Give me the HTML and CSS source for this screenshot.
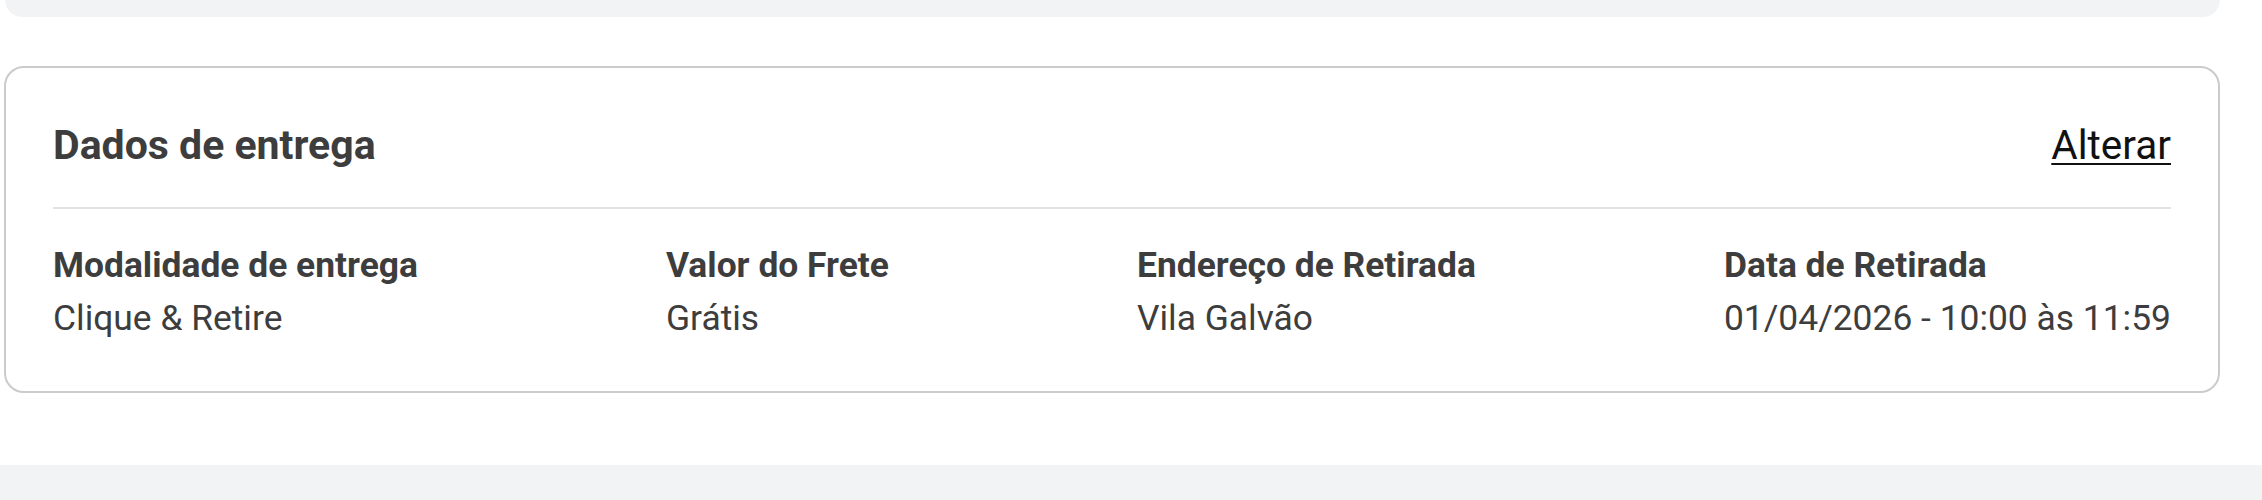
FILE: index.html
```html
<!DOCTYPE html>
<html lang="pt-BR">
<head>
  <meta charset="utf-8">
  <title>Dados de entrega</title>
  <link rel="stylesheet" href="styles.css">
</head>
<body>

  <div class="prev-card"></div>

  <section class="card">
    <header class="card-header">
      <h2>Dados de entrega</h2>
      <a href="#" class="change-link">Alterar</a>
    </header>

    <div class="info">
      <div class="info-item">
        <strong>Modalidade de entrega</strong>
        <span>Clique &amp; Retire</span>
      </div>
      <div class="info-item">
        <strong>Valor do Frete</strong>
        <span>Grátis</span>
      </div>
      <div class="info-item">
        <strong>Endereço de Retirada</strong>
        <span>Vila Galvão</span>
      </div>
      <div class="info-item">
        <strong>Data de Retirada</strong>
        <span>01/04/2026 - 10:00 às 11:59</span>
      </div>
    </div>
  </section>

  <div class="next-section"></div>

</body>
</html>
```

FILE: styles.css
```css
body {
  margin: 0;
  background-color: #fff;
  font-family: Roboto, "Liberation Sans", Arial, sans-serif;
  color: #3d3d3d;
}

.prev-card {
  height: 17px;
  margin: 0 42px 0 5px;
  background-color: #f2f3f5;
  border-radius: 0 0 20px 20px;
}

.card {
  margin: 49px 42px 0 4px;
  padding: 54px 47px 46px;
  border: 2px solid #cbcbcb;
  border-radius: 20px;
}

.card-header {
  display: flex;
  justify-content: space-between;
  align-items: baseline;
  padding-bottom: 38px;
  border-bottom: 2px solid #e2e2e2;
}

.card-header h2 {
  margin: 0;
  font-size: 41px;
  font-weight: 700;
  line-height: 47px;
}

.change-link {
  font-size: 40.5px;
  line-height: 47px;
  color: #111;
  text-decoration: underline;
  text-decoration-thickness: 2px;
  text-underline-offset: 4px;
}

.info {
  display: flex;
  justify-content: space-between;
  margin-top: 30px;
}

.info-item {
  display: flex;
  flex-direction: column;
  font-size: 35.4px;
  line-height: 1.5;
}

.info-item strong {
  font-weight: 700;
}

.next-section {
  height: 36px;
  margin-top: 72px;
  background-color: #f2f3f5;
}
```
